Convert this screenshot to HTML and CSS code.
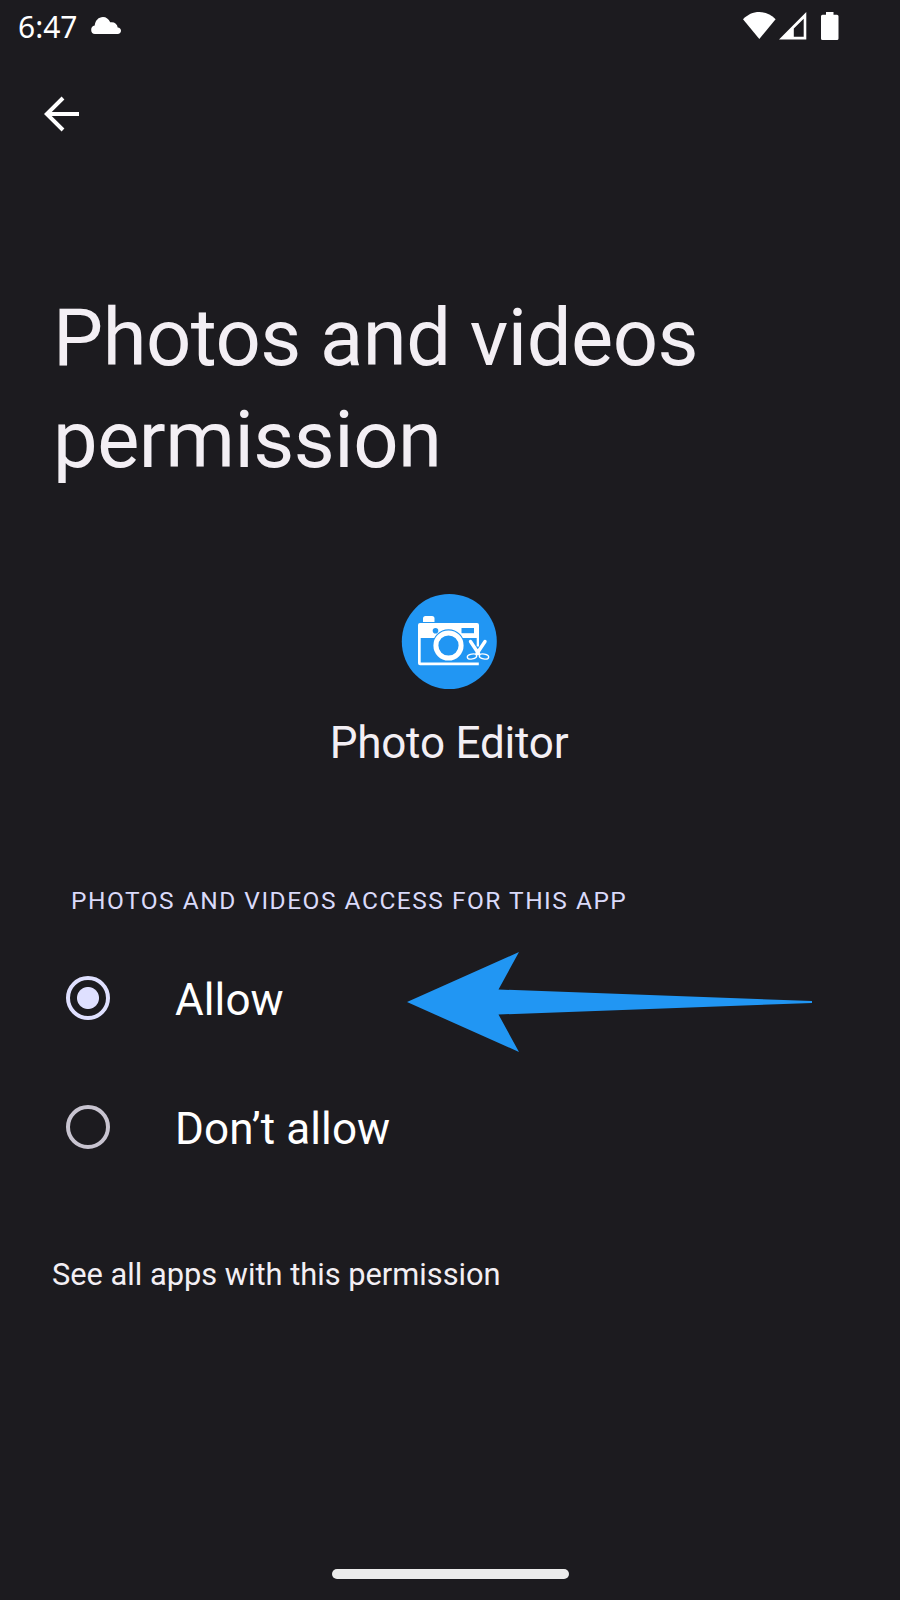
FILE: index.html
```html
<!DOCTYPE html>
<html lang="en">
<head>
    <meta charset="utf-8">
    <title>Photos and videos permission</title>
    <link rel="stylesheet" href="styles.css">
</head>
<body>
    <div class="screen">
        <div class="status-bar">
            <span class="time">6:47</span>
            <svg class="cloud" width="30" height="17" viewBox="0 0 30 17">
                <path d="M4 17a4.300 4.300 0 0 1-.3-8.500C4.300 3.500 7.500 0 12 0c3.200 0 5.700 2 7.200 5.300 4-.7 7 1.300 7.500 5.200 2 .2 3.300 1.500 3.300 3.200 0 1.900-1.400 3.300-3.300 3.300z"/>
            </svg>
            <div class="status-icons">
                <svg class="wifi" width="33" height="27" viewBox="0 0 33 27">
                    <path d="M16.300 27 0 7.200C4.500 2.600 10 0 16.300 0s11.800 2.600 16.300 7.200z"/>
                </svg>
                <svg class="signal" width="28" height="28" viewBox="0 0 28 28">
                    <path fill-rule="evenodd" d="M27.300 0v27.500H0zM24.700 6.700 14.800 16.500v8.200h9.900z"/>
                </svg>
                <svg class="battery" width="18" height="28" viewBox="0 0 18 28">
                    <path d="M5 0h7.500v2.700H16a1.500 1.500 0 0 1 1.500 1.500v22.300A1.500 1.500 0 0 1 16 28H1.500A1.500 1.500 0 0 1 0 26.500V4.200a1.500 1.500 0 0 1 1.500-1.500H5z"/>
                </svg>
            </div>
        </div>

        <div class="toolbar">
            <svg class="back" width="36" height="36" viewBox="0 0 36 36">
                <path d="M35 18H3M19 2 2.800 18 19 34"/>
            </svg>
        </div>

        <h1>Photos and videos permission</h1>

        <div class="app">
            <svg width="96" height="96" viewBox="0 0 96 96">
                <circle cx="48.300" cy="47.500" r="47.500" fill="#2196f3"/>
                <path d="M22 28v-3.500a2.500 2.500 0 0 1 2.500-2.500H31a2.500 2.500 0 0 1 2.500 2.500V28z" fill="#fff"/>
                <path d="M19 29h57a2 2 0 0 1 2 2v21.500h-2.300V44H19.700v24.500H77.800V71.200H19a2 2 0 0 1-2-2V31a2 2 0 0 1 2-2z" fill="#fff"/>
                <rect x="60.500" y="34" width="12.500" height="5.200" fill="#2196f3"/>
                <circle cx="34.500" cy="36.700" r="2.800" fill="#2196f3"/>
                <circle cx="47.500" cy="51.500" r="16.200" fill="#2196f3"/>
                <circle cx="47.500" cy="51.500" r="12.600" fill="none" stroke="#fff" stroke-width="5"/>
                <path d="m69.500 47.500 8 12M84 47.500l-8 12" fill="none" stroke="#fff" stroke-width="3.400" stroke-linecap="round"/>
                <g fill="none" stroke="#fff" stroke-width="1.400">
                    <ellipse cx="71" cy="62.500" rx="4.700" ry="2.400" transform="rotate(-10 71 62.500)"/>
                    <ellipse cx="83" cy="62.500" rx="4.700" ry="2.400" transform="rotate(10 83 62.500)"/>
                </g>
            </svg>
            <div class="app-name">Photo Editor</div>
        </div>

        <div class="section-title">PHOTOS AND VIDEOS ACCESS FOR THIS APP</div>
        <div class="options">
            <div class="option">
                <span class="radio checked"></span>
                <span class="label">Allow</span>
                <svg class="pointer" width="406" height="100" viewBox="0 0 406 100">
                    <path d="M0 50 112 0 91.500 37.500 405 49v2L91.500 62.500 112 100z"/>
                </svg>
            </div>
            <div class="option">
                <span class="radio"></span>
                <span class="label">Don’t allow</span>
            </div>
        </div>

        <div class="see-all">See all apps with this permission</div>

        <div class="nav-handle"></div>
    </div>
</body>
</html>
```

FILE: styles.css
```css
* { box-sizing: border-box; }
body { margin: 0; background: #1c1b1f; color: #f3eff4; font-family: Roboto, sans-serif; }
svg { display: block; flex: none; }
h1 { margin: 141px 53px 0; font-size: 79.5px; line-height: 102px; font-weight: 400; letter-spacing: -0.5px; }

.screen { height: 1600px; display: flex; flex-direction: column; overflow: hidden; }

.status-bar { display: flex; align-items: flex-start; height: 56px; padding-left: 18px; color: #fff; fill: #fff; }
.time { width: 73px; margin-top: 9px; font-family: "Noto Sans", sans-serif; font-size: 30px; line-height: 36px; }
.cloud { margin-top: 17px; }
.status-icons { display: flex; margin: 12px 61px 0 auto; }
.signal { margin-left: 3px; }
.battery { margin-left: 14px; }

.toolbar { height: 90px; padding: 40px 44px 0; }
.back { fill: none; stroke: #fff; stroke-width: 4; }

.app { display: flex; flex-direction: column; align-items: center; margin: 103px 2px 0 0; }
.app-name { margin-top: 27px; font-size: 44px; line-height: 52px; letter-spacing: -0.2px; }

.section-title { margin: 117px 0 0 71px; font-size: 24.5px; line-height: 30px; letter-spacing: 1.5px; color: #dadafa; }
.options { margin-top: 19px; }
.option { display: flex; align-items: center; height: 129px; padding-left: 65.5px; color: #fff; }
.radio { width: 44px; height: 44px; margin: 0 65.5px 4px 0; border: 4.5px solid #c8c4d0; border-radius: 50%; }
.radio.checked { border-color: #dfe0ff; background: radial-gradient(circle, #dfe0ff 10.500px, transparent 11.500px); }
.label { width: 232px; font-size: 44px; line-height: 52px; letter-spacing: 0.1px; }
.pointer { margin-top: 5px; fill: #2196f3; }

.see-all { margin: 64px 0 0 52px; font-size: 30.8px; line-height: 36px; }

.nav-handle { width: 237px; height: 10px; margin: auto auto 21px 331.5px; border-radius: 5px; background: #ececec; }
```
